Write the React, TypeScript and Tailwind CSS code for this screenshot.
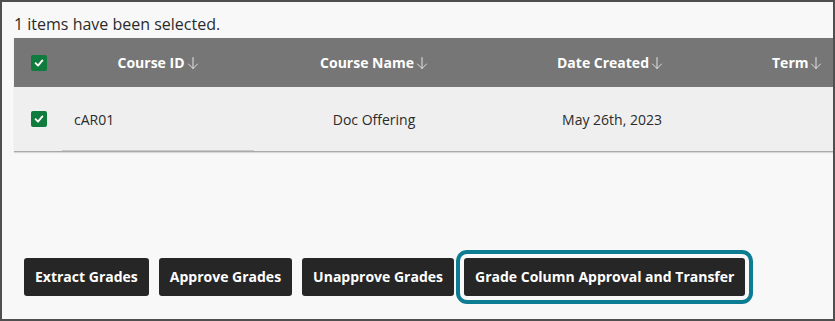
import React from "react";

const font = { fontFamily: '"Open Sans", "Noto Sans", Arial, sans-serif' };

function Check() {
  return (
    <span className="flex h-[16px] w-[16px] items-center justify-center rounded-[2px] bg-[#0f7b3c]">
      <svg width="10" height="10" viewBox="0 0 10 10" fill="none">
        <path d="M1.6 5.2 L4 7.6 L8.4 2.4" stroke="white" strokeWidth="1.9" strokeLinecap="round" strokeLinejoin="round" />
      </svg>
    </span>
  );
}

function Arrow() {
  return (
    <svg width="12" height="14" viewBox="0 0 12 14" fill="none" className="ml-[2px] mt-[1px]">
      <path d="M6 1.5 V12.5 M1.5 8 L6 12.5 L10.5 8" stroke="#e2e2e2" strokeWidth="1" strokeLinecap="round" strokeLinejoin="round" />
    </svg>
  );
}

function Head({ label, className }: { label: string; className: string }) {
  return (
    <div className={"flex items-center text-[14px] font-bold text-white " + className}>
      <span>{label}</span>
      <Arrow />
    </div>
  );
}

function Btn({ label, focused }: { label: string; focused?: boolean }) {
  return (
    <button
      className={
        "h-[38px] rounded-[3px] bg-[#262626] px-[11px] text-[14px] font-bold leading-[20px] text-white " +
        (focused ? "outline-[4px] outline-solid outline-[#0b7c92] outline-offset-[4px]" : "")
      }
    >
      {label}
    </button>
  );
}

export default function App() {
  return (
    <div style={font} className="box-border h-[321px] w-[835px] overflow-hidden border-2 border-[#4f4f4f] bg-[#f8f8f8]">
      <div className="flex flex-col pl-[12px]">
        <div className="h-[36px] pt-[10px] text-[16px] leading-[24px] text-[#2b2b2b]">1 items have been selected.</div>
        <div className="shadow-[0_1px_1px_rgba(0,0,0,0.12)]">
          <div className="grid h-[49px] grid-cols-[48px_192px_240px_232px_1fr] items-center bg-[#767676]">
            <div className="flex justify-center pl-[2px]"><Check /></div>
            <Head label="Course ID" className="justify-center" />
            <Head label="Course Name" className="justify-center" />
            <Head label="Date Created" className="justify-center" />
            <Head label="Term" className="pl-[46px]" />
          </div>
          <div className="grid h-[65px] grid-cols-[48px_192px_240px_232px_1fr] items-center border-b border-[#a9a9a9] bg-[#efefef] text-[14px] text-[#2b2b2b]">
            <div className="flex justify-center pl-[2px]"><Check /></div>
            <div className="relative flex h-full items-center pl-[12px]">
              cAR01
              <span className="absolute bottom-0 left-0 right-0 h-px bg-[#c9c9c9]" />
            </div>
            <div className="text-center">Doc Offering</div>
            <div className="pl-[4px] text-center">May 26th, 2023</div>
            <div />
          </div>
        </div>
        <div className="mt-[106px] flex gap-[10px] pl-[10px]">
          <Btn label="Extract Grades" />
          <Btn label="Approve Grades" />
          <Btn label="Unapprove Grades" />
          <Btn label="Grade Column Approval and Transfer" focused />
        </div>
      </div>
    </div>
  );
}
